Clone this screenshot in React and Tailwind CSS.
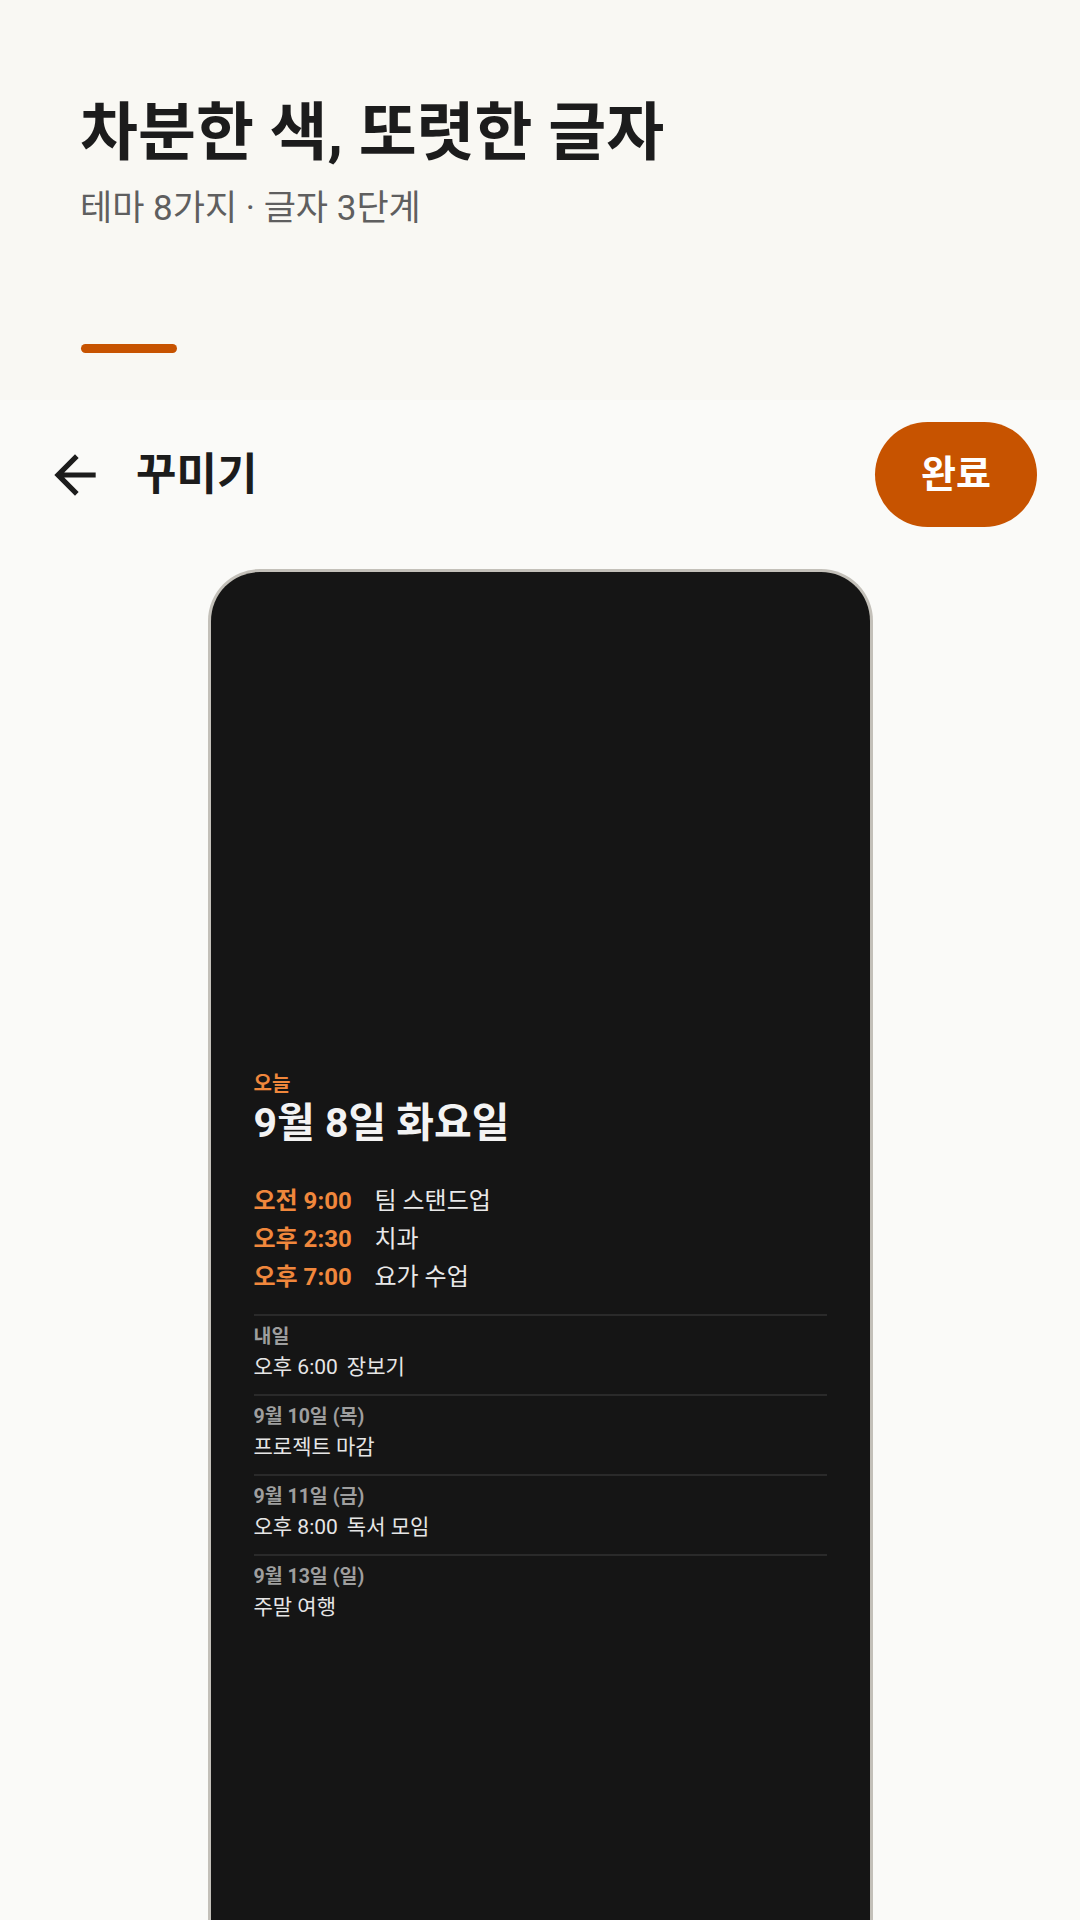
import React from 'react';

const font = { fontFamily: 'Roboto, "Noto Sans CJK KR", sans-serif' };

const today = [
  { time: '오전 9:00', title: '팀 스탠드업' },
  { time: '오후 2:30', title: '치과' },
  { time: '오후 7:00', title: '요가 수업' },
];

const upcoming = [
  { day: '내일', time: '오후 6:00', title: '장보기' },
  { day: '9월 10일 (목)', title: '프로젝트 마감' },
  { day: '9월 11일 (금)', time: '오후 8:00', title: '독서 모임' },
  { day: '9월 13일 (일)', title: '주말 여행' },
];

const ArrowBack = () => (
  <svg width="62" height="62" viewBox="0 0 24 24" fill="#1c1c1c">
    <path d="M20 11H7.83l5.59-5.59L12 4l-8 8 8 8 1.41-1.41L7.83 13H20v-2z" />
  </svg>
);

const PhonePreview = () => (
  <div className="mx-auto w-[665px] flex-1 min-h-[1360px] rounded-t-[52px] border-[3px] border-b-0 border-[#c3c0b9] bg-[#151515] px-[43px] pt-[500px]">
    <div className="text-[20px] leading-[24px] font-bold text-[#f0873c]">오늘</div>
    <div className="mt-[3px] text-[41px] leading-[48px] font-bold text-[#f3f3f3]">9월 8일 화요일</div>

    <div className="mt-[35px] mb-[18px]">
      {today.map(ev => (
        <div key={ev.time} className="flex text-[24px] leading-[38px]">
          <span className="w-[121px] shrink-0 font-bold text-[#f0873c]">{ev.time}</span>
          <span className="text-[#e9e9e9]">{ev.title}</span>
        </div>
      ))}
    </div>

    {upcoming.map(item => (
      <div key={item.day} className="border-t-2 border-[#2a2a2a] pt-[6px] pb-[12px]">
        <div className="text-[19.5px] leading-[30px] font-bold text-[#9e9e9e]">{item.day}</div>
        <div className="flex text-[21px] leading-[30px] text-[#e6e6e6]">
          {item.time && <span className="mr-[9px]">{item.time}</span>}
          <span>{item.title}</span>
        </div>
      </div>
    ))}
  </div>
);

export default function App() {
  return (
    <div style={font} className="w-[1080px] h-[1920px] overflow-hidden flex flex-col bg-[#fafaf8]">
      <section className="h-[400px] shrink-0 bg-[#f9f8f3] pl-[80px] pt-[93px]">
        <h1 className="text-[63px] leading-[80px] font-bold text-[#1c1c1c]">차분한 색, 또렷한 글자</h1>
        <p className="mt-[15px] text-[35px] leading-[42px] text-[#5f5f5f]">테마 8가지 · 글자 3단계</p>
        <div className="mt-[114px] ml-[1px] h-[9px] w-[96px] rounded-full bg-[#c75300]" />
      </section>

      <header className="flex items-center justify-between pl-[44px] pr-[43px] pt-[22px]">
        <div className="flex items-center gap-[30px]">
          <ArrowBack />
          <span className="text-[44px] leading-[52px] font-bold text-[#1c1c1c]">꾸미기</span>
        </div>
        <button className="h-[105px] w-[162px] rounded-full bg-[#c75300] text-[38px] font-bold text-white">
          완료
        </button>
      </header>

      <div className="mt-[42px] flex flex-1 flex-col">
        <PhonePreview />
      </div>
    </div>
  );
}
